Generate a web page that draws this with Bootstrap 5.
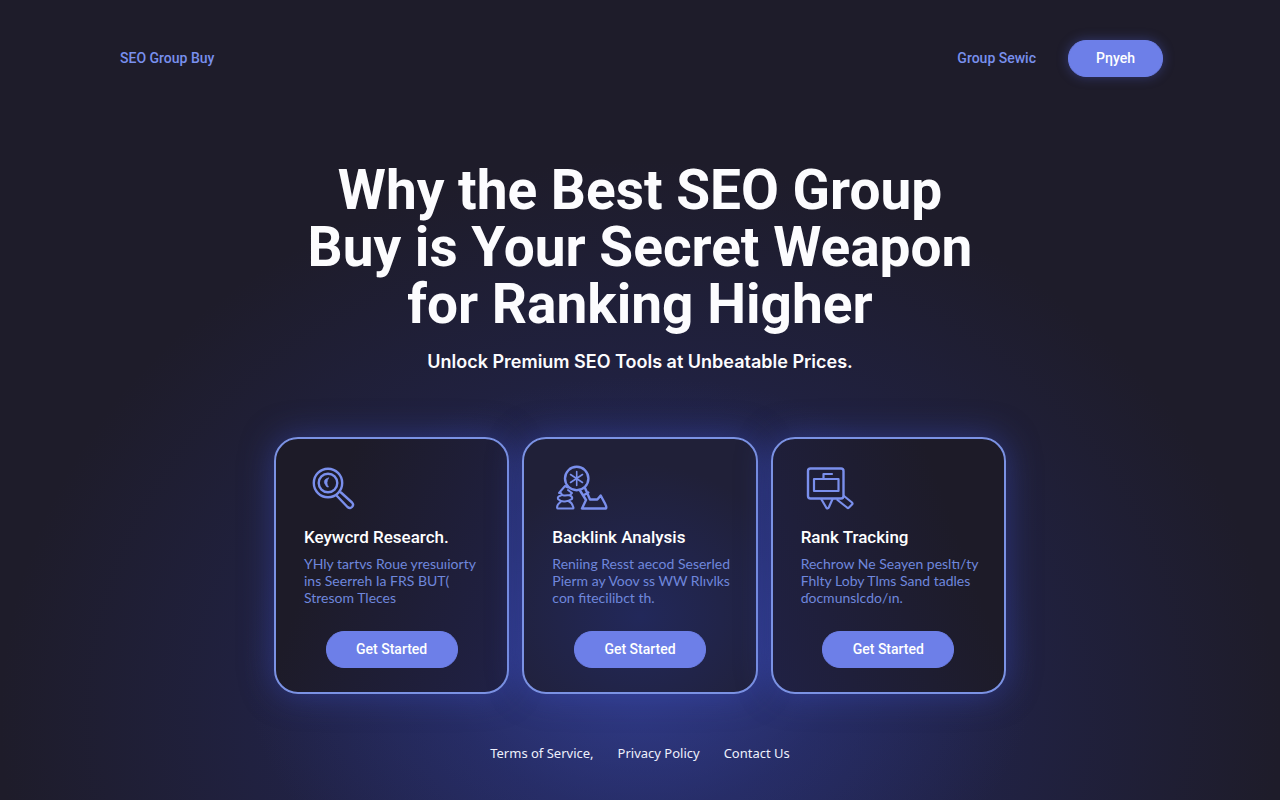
<!DOCTYPE html>
<html lang="en">
<head>
<meta charset="utf-8">
<meta name="viewport" content="width=device-width, initial-scale=1">
<title>SEO Group Buy</title>
<link href="https://cdn.jsdelivr.net/npm/bootstrap@5.3.0/dist/css/bootstrap.min.css" rel="stylesheet">
<script src="https://cdn.jsdelivr.net/npm/bootstrap@5.3.0/dist/js/bootstrap.bundle.min.js" defer></script>
<style>
body{
  min-height:100vh;color:#fcfcfe;font-family:Roboto,"Liberation Sans",sans-serif;font-size:14px;line-height:17px;
  background:
    radial-gradient(ellipse 31% 36% at 50% 83%,rgba(58,72,165,.6),rgba(48,60,145,.3) 50%,transparent),
    radial-gradient(ellipse 50% 70% at 50% 90%,rgba(38,46,112,.78),rgba(36,42,104,.46) 50%,transparent) #1e1c2a;
}
a{text-decoration:none}
.site-bar{padding:40px 117px 0 120px}
.site-bar nav{gap:32px}
.site-bar a{color:#7990ee;font-weight:500}
.pill{
  --bs-btn-bg:#6d7fe8;--bs-btn-border-color:#6d7fe8;--bs-btn-color:#fff;
  --bs-btn-hover-bg:#8292f4;--bs-btn-hover-border-color:#8292f4;--bs-btn-hover-color:#fff;
  --bs-btn-border-radius:18px;--bs-btn-font-size:14px;--bs-btn-line-height:17px;--bs-btn-font-weight:500;
  --bs-btn-padding-y:9px;--bs-btn-padding-x:24px;
}
.pill-glow{min-width:95px;box-shadow:0 0 12px rgba(90,110,240,.35)}
.tool .pill{min-width:132px}
.hero{padding-top:85px}
.hero h1{font:700 55px/57px Roboto,"Liberation Sans",sans-serif;margin:0}
.hero p{font-family:Inter,sans-serif;font-size:18px;line-height:24px;font-weight:600;margin:17px 0 0}
.tools{display:grid;grid-template-columns:repeat(auto-fit,minmax(220px,1fr));max-width:732px;margin:63px auto 0;gap:13px}
.tool{
  --bs-card-bg:transparent;--bs-card-color:#fff;--bs-card-border-color:#7b92e4;--bs-card-border-width:2px;
  --bs-card-border-radius:24px;--bs-card-inner-border-radius:22px;
  --bs-card-spacer-x:28px;--bs-card-spacer-y:24px;
  box-shadow:0 0 32px rgba(58,76,190,.5);
}
.tool-start{background:linear-gradient(110deg,#1d1b28 25%,#202146)}
.tool-mid{background:radial-gradient(ellipse 70% 60% at 50% 70%,#22285a,#202038)}
.tool-end{background:linear-gradient(250deg,#1d1b28 25%,#202144)}
.tool svg{width:56px;height:48px;fill:none;stroke:#7a8fec;stroke-width:2.4;stroke-linecap:round;stroke-linejoin:round}
.tool h2{font-size:17px;line-height:20px;font-weight:500;margin:16px 0 8px}
.tool p{font-family:Lato,sans-serif;color:#6f87dc;white-space:nowrap;margin:0 0 25px}
.site-foot{padding:51px 0 36px;gap:24px;font-family:"Noto Sans",sans-serif;font-size:13px}
.site-foot a{color:#eef0fc}
</style>
</head>
<body>
<header class="site-bar d-flex align-items-center justify-content-between">
  <a href="#">SEO Group Buy</a>
  <nav class="d-flex align-items-center">
    <a href="#">Group Sewic</a>
    <button type="button" class="btn pill pill-glow">Pηyeh</button>
  </nav>
</header>
<main>
  <section class="hero text-center">
    <h1>Why the Best SEO Group<br>Buy is Your Secret Weapon<br>for Ranking Higher</h1>
    <p>Unlock Premium SEO Tools at Unbeatable Prices.</p>
  </section>
  <section class="tools">
    <article class="card tool tool-start"><div class="card-body">
      <svg viewBox="0 0 56 48" aria-hidden="true"><circle cx="24" cy="20" r="14.2"/><circle cx="24" cy="20" r="9.3"/><path d="M24.500 15q-5 1-4 5q2 5 4 4q-3-4 0-9z" fill="#7a8fec" stroke-width=".6"/><path d="M33 33l10.500 11q2.500 2 4.500 0q2.200-2.300 0-4.500L37 29.500"/></svg>
      <h2>Keywcrd Research.</h2>
      <p>YHly tartvs Roue yresuıiorty<br>ins Seerreh Ia FRS BUT(<br>Stresom Tleces</p>
      <div class="text-center"><button type="button" class="btn pill">Get Started</button></div>
    </div></article>
    <article class="card tool tool-mid"><div class="card-body">
      <svg viewBox="0 0 56 48" aria-hidden="true"><circle cx="24.700" cy="15.500" r="11.700"/><path d="M24.700 8.500v14M18.500 11.500l12 8M30.500 11.500l-12 8" stroke-width="1.600"/><path d="M16 24.500l-3-1.500l-6 7h2q1 3 4 2.500t5-.5l2-2l-4-3M9 32.500q-4 1-3 3.500q3 3 7 2.500t7-2.500q1-2-2-3.500M9 38.500q-4 3-4 6q0 1 1 1h15q1 0 0-2q-1-4-4-5" stroke-width="2"/><path d="M28 27.500l6 9.500l-4 8.500h24q1-1-1-5l-4.300-8l-3.400 4H38l-5-11.500M32 32l4.300-2.500"/></svg>
      <h2>Backlink Analysis</h2>
      <p>Reniing Resst aecod Seserled<br>Pierm ay Voov ss WW Rlıvlks<br>con fitecilibct th.</p>
      <div class="text-center"><button type="button" class="btn pill">Get Started</button></div>
    </div></article>
    <article class="card tool tool-end"><div class="card-body">
      <svg viewBox="0 0 56 48" aria-hidden="true"><rect x="7" y="5.500" width="35.500" height="30" rx="2.500"/><path d="M13 16h24.500v12H13zM22.500 15.500V11H31M20.500 36.500l5 8.500q1.500 1 2.500-1l3.300-7.500M36.500 37l9.500 7.500q1 1 2 0l3-3q1-1 0-2l-8-6.500" stroke-width="2.200"/></svg>
      <h2>Rank Tracking</h2>
      <p>Rechrow Ne Seayen pesltı/ty<br>Fhlty Loby Tlms Sand tadles<br>ɗocmunslcdo/ın.</p>
      <div class="text-center"><button type="button" class="btn pill">Get Started</button></div>
    </div></article>
  </section>
</main>
<footer class="site-foot d-flex flex-wrap justify-content-center">
  <a href="#">Terms of Service,</a><a href="#">Privacy Policy</a><a href="#">Contact Us</a>
</footer>
</body>
</html>
